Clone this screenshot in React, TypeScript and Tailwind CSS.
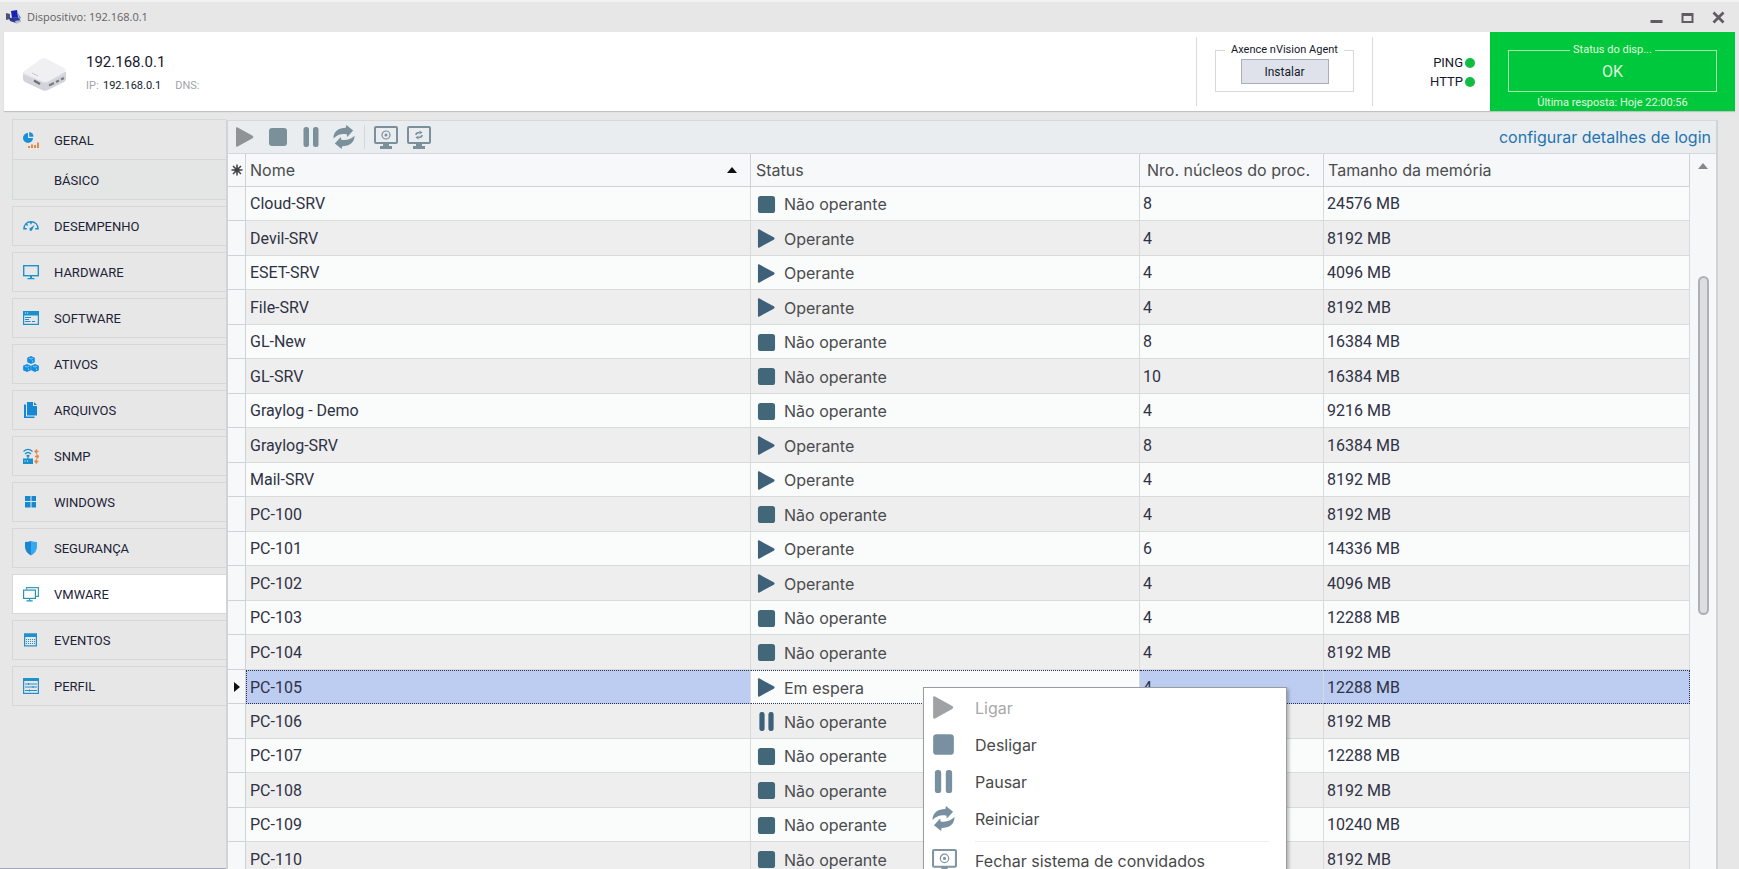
import React from 'react';
import clsx from 'clsx';

type VmState = 'stop' | 'play' | 'pause';

interface Machine {
  name: string;
  state: VmState;
  status: string;
  cores: number;
  memory: string;
}

const machines: Machine[] = [
  { name: 'Cloud-SRV', state: 'stop', status: 'Não operante', cores: 8, memory: '24576 MB' },
  { name: 'Devil-SRV', state: 'play', status: 'Operante', cores: 4, memory: '8192 MB' },
  { name: 'ESET-SRV', state: 'play', status: 'Operante', cores: 4, memory: '4096 MB' },
  { name: 'File-SRV', state: 'play', status: 'Operante', cores: 4, memory: '8192 MB' },
  { name: 'GL-New', state: 'stop', status: 'Não operante', cores: 8, memory: '16384 MB' },
  { name: 'GL-SRV', state: 'stop', status: 'Não operante', cores: 10, memory: '16384 MB' },
  { name: 'Graylog - Demo', state: 'stop', status: 'Não operante', cores: 4, memory: '9216 MB' },
  { name: 'Graylog-SRV', state: 'play', status: 'Operante', cores: 8, memory: '16384 MB' },
  { name: 'Mail-SRV', state: 'play', status: 'Operante', cores: 4, memory: '8192 MB' },
  { name: 'PC-100', state: 'stop', status: 'Não operante', cores: 4, memory: '8192 MB' },
  { name: 'PC-101', state: 'play', status: 'Operante', cores: 6, memory: '14336 MB' },
  { name: 'PC-102', state: 'play', status: 'Operante', cores: 4, memory: '4096 MB' },
  { name: 'PC-103', state: 'stop', status: 'Não operante', cores: 4, memory: '12288 MB' },
  { name: 'PC-104', state: 'stop', status: 'Não operante', cores: 4, memory: '8192 MB' },
  { name: 'PC-105', state: 'play', status: 'Em espera', cores: 4, memory: '12288 MB' },
  { name: 'PC-106', state: 'pause', status: 'Não operante', cores: 4, memory: '8192 MB' },
  { name: 'PC-107', state: 'stop', status: 'Não operante', cores: 4, memory: '12288 MB' },
  { name: 'PC-108', state: 'stop', status: 'Não operante', cores: 4, memory: '8192 MB' },
  { name: 'PC-109', state: 'stop', status: 'Não operante', cores: 4, memory: '10240 MB' },
  { name: 'PC-110', state: 'stop', status: 'Não operante', cores: 4, memory: '8192 MB' },
];

const SELECTED = 'PC-105';

interface IconProps {
  className?: string;
}

const PlayIcon: React.FC<IconProps> = ({ className }) => (
  <svg viewBox="0 0 20 20" className={className} fill="currentColor" aria-hidden="true">
    <path d="M1 1.2Q1 0 2.200.3L17.600 8.800Q19.400 10 17.600 11.200L2.200 19.700Q1 20 1 18.800Z" />
  </svg>
);

const StopIcon: React.FC<IconProps> = ({ className }) => (
  <svg viewBox="0 0 20 20" className={className} fill="currentColor" aria-hidden="true">
    <rect x="1" y="1" width="18" height="18" rx="3" />
  </svg>
);

const PauseIcon: React.FC<IconProps> = ({ className }) => (
  <svg viewBox="0 0 20 20" className={className} fill="currentColor" aria-hidden="true">
    <rect x="2.500" y="0" width="5.500" height="20" rx="2.500" />
    <rect x="12" y="0" width="5.500" height="20" rx="2.500" />
  </svg>
);

const RestartIcon: React.FC<IconProps> = ({ className }) => (
  <svg viewBox="0 0 24 26" className={className} fill="currentColor" aria-hidden="true">
    <path d="M0.500 14.500C0.500 7 6 3 14 3L14.500 0L22 6L15.500 13L15 10C9 9 5 10.500 0.500 14.500Z" />
    <path d="M23.500 11.500C23.500 19 18 23 10 23L9.500 26L2 20L8.500 13L9 16C15 17 19 15.500 23.500 11.500Z" />
  </svg>
);

const GuestOffIcon: React.FC<IconProps> = ({ className }) => (
  <svg viewBox="0 0 24 23" className={className} fill="none" stroke="currentColor" aria-hidden="true">
    <rect x="1" y="1" width="22" height="16" rx="1" strokeWidth="2" />
    <circle cx="12" cy="9" r="4" strokeWidth="1.200" />
    <circle cx="12" cy="9" r="1.500" fill="currentColor" stroke="none" />
    <path d="M9 17h6v3h3v3H6v-3h3z" fill="currentColor" stroke="none" />
  </svg>
);

const GuestRestartIcon: React.FC<IconProps> = ({ className }) => (
  <svg viewBox="0 0 24 23" className={className} fill="none" stroke="currentColor" aria-hidden="true">
    <rect x="1" y="1" width="22" height="16" rx="1" strokeWidth="2" />
    <path d="M9 9C9 7 10.500 6.500 12.500 6.500M15 9C15 11 13.500 11.500 11.500 11.500" strokeWidth="1.600" />
    <path d="M12.500 4.500l3 2-3 2zM11.500 9.500l-3 2 3 2z" fill="currentColor" stroke="none" />
    <path d="M9 17h6v3h3v3H6v-3h3z" fill="currentColor" stroke="none" />
  </svg>
);

const stateIcons: Record<VmState, React.FC<IconProps>> = {
  play: PlayIcon,
  stop: StopIcon,
  pause: PauseIcon,
};

// Sidebar glyphs, all on a 16px grid
const glyphs: Record<string, React.ReactNode> = {
  GERAL: (
    <>
      <path d="M5 1a5 5 0 1 0 5 5H5z" fill="#1a8fd6" />
      <path d="M6.200 0A4.500 4.500 0 0 1 10.500 4.800H6.200z" fill="#1a8fd6" />
      <path d="M5 14h2v2H5zM8 12.500h2V16H8zM11 13h2v3h-2zM14 10.500h2V16h-2z" fill="#e08a4a" />
    </>
  ),
  DESEMPENHO: (
    <g fill="none" stroke="#1f8ccb" strokeWidth="1.400">
      <path d="M.8 11.500C.8 6.500 4 3.700 8 3.700s7.200 2.800 7.200 7.800M.8 10.800h3M12.200 10.800h3M3.200 6l1.500 1.500M8 3.700v2.500" />
      <path d="M6.500 10.500L11.500 7 9 12.300Q7.500 13.500 6.600 12.300Z" fill="#1f8ccb" stroke="none" />
    </g>
  ),
  HARDWARE: (
    <>
      <rect x=".7" y="1.700" width="14.600" height="10" fill="none" stroke="#1a93cf" strokeWidth="1.400" />
      <path d="M7 12h2v2h2.500v1.200h-7V14H7z" fill="#1a93cf" />
    </>
  ),
  SOFTWARE: (
    <>
      <rect x=".6" y="1.600" width="14.800" height="12.800" fill="none" stroke="#1a8fd0" strokeWidth="1.200" />
      <path d="M0 1h16v4.500H0z" fill="#1a8fd0" />
      <path d="M2 3h1M4.200 3h1" stroke="#fff" />
      <path d="M2 7.500h6M2 9.500h4M2 11.500h5.500M9 11.500h3" stroke="#1a8fd0" />
    </>
  ),
  ATIVOS: (
    <>
      <path d="M8 0l3.800 1.700v4.600L8 8 4.200 6.300V1.700zM4 8l3.900 1.700v4.600L4 16 .1 14.300V9.700zM12 8l3.900 1.700v4.600L12 16l-3.900-1.700V9.700z" fill="#168ee0" />
      <path d="M6 2.200L8 3l2-.8M2 10.200l2 .8 2-.8M10 10.200l2 .8 2-.8M5.500 12.500v1.500M13.500 12.500v1.500M9.500 4.500v1.500" fill="none" stroke="#9ad4f5" strokeWidth=".8" />
    </>
  ),
  ARQUIVOS: (
    <>
      <path d="M4 0h6v4h4v9.500H4z" fill="#1787d4" />
      <path d="M11 0l3 3h-3z" fill="#1787d4" />
      <path d="M1 2.500h2v12h8.500V16H1z" fill="#1787d4" />
    </>
  ),
  SNMP: (
    <>
      <path d="M0 10.500h10V16H0z" fill="#1a8fd0" />
      <path d="M1.500 13h1M4 13h1" stroke="#fff" />
      <path d="M.5 3.500Q5-.8 9.500 3.500M2 6Q5 3 8 6M3.500 8.200Q5 6.800 6.500 8.200M5 8v3" fill="none" stroke="#1a8fd0" strokeWidth="1.200" />
      <path d="M12 3.500h3.500M14 1.500l-2 2 2 2M12 8.500h3.500M13.500 6.500l2 2-2 2M12 13.500h3.500M14 11.500l-2 2 2 2" fill="none" stroke="#e58a50" strokeWidth="1.400" />
    </>
  ),
  WINDOWS: <path d="M2 2h5.500v5H2zM8.500 2H13v5H8.500zM2 8h5.500v5.500H2zM8.500 8H13v5.500H8.500z" fill="#1389cf" />,
  'SEGURANÇA': (
    <>
      <path d="M2 2Q5 2 8 1v14.500Q2 12 2 7z" fill="#1b86cf" />
      <path d="M8 1q3 1 6 1v5q0 5-6 8.500z" fill="#39a9ee" />
    </>
  ),
  VMWARE: (
    <>
      <path d="M3.500 3.500V1.600h11.900v8.800H13" fill="none" stroke="#3a9fb8" strokeWidth="1.200" />
      <rect x=".6" y="4.100" width="11.800" height="8.300" fill="none" stroke="#2894bb" strokeWidth="1.200" />
      <path d="M6 12.500h1.200v1.800h2.500v1.200H3.500v-1.200H6z" fill="#2894bb" />
    </>
  ),
  EVENTOS: (
    <>
      <rect x="1.600" y="2.100" width="11.800" height="11.800" fill="none" stroke="#2190cb" strokeWidth="1.200" />
      <path d="M1 1.500h13V5H1z" fill="#2190cb" />
      <path d="M3 7.500h9M3 9.500h9M3 11.500h9" stroke="#2190cb" strokeDasharray="1 1" />
    </>
  ),
  PERFIL: (
    <>
      <rect x=".6" y=".6" width="14.800" height="14.800" fill="none" stroke="#2190cb" strokeWidth="1.200" />
      <path d="M0 0h16v3H0z" fill="#2190cb" />
      <path d="M2 6h12M2 9h12M2 12.500h12M5.500 5v2M10 8v2M6.500 11.500v2" stroke="#2190cb" />
    </>
  ),
};

const menuAfterGeral = [
  'DESEMPENHO', 'HARDWARE', 'SOFTWARE', 'ATIVOS', 'ARQUIVOS', 'SNMP',
  'WINDOWS', 'SEGURANÇA', 'VMWARE', 'EVENTOS', 'PERFIL',
];

const SideIcon: React.FC<{ name: string }> = ({ name }) => (
  <svg viewBox="0 0 16 16" className="h-4 w-4" aria-hidden="true">{glyphs[name]}</svg>
);

const SideItem: React.FC<{ name: string }> = ({ name }) => (
  <a
    href="#"
    className={clsx(
      'flex h-10 items-center gap-[15px] border border-r-0 border-[#d5d8da] pl-[10px] text-[13px] text-[#1d2337]',
      name === 'VMWARE' && 'bg-white'
    )}
  >
    <SideIcon name={name} />
    <span className="pt-[2px]">{name}</span>
  </a>
);

const TitleBar = () => (
  <div className="flex h-8 shrink-0 items-center border-t-2 border-[#f2f2f2] pl-[6px] pr-[14px]">
    <svg viewBox="0 0 16 14" className="h-[14px] w-4" aria-hidden="true">
      <path d="M0 3l4 1v5l-4 1z" fill="#4b5573" />
      <path d="M5 1l6-1 1 7-6 1z" fill="#1a22b4" />
      <path d="M3 8l9-1 3 4-5 2-6-2z" fill="#2b3a9a" />
      <path d="M12 3l3 5-2 1z" fill="#5a83c8" />
      <path d="M9 11l6-1v2l-5 2z" fill="#b9bccb" />
    </svg>
    <span className="ml-[5px] font-['Open_Sans',sans-serif] text-[11px] text-[#626264]">Dispositivo: 192.168.0.1</span>
    <div className="ml-auto flex items-center gap-[18px] text-[#615c62]">
      <button type="button" aria-label="Minimizar">
        <svg viewBox="0 0 13 13" className="h-[13px] w-[13px]"><path d="M0.500 9h12v3h-12z" fill="currentColor" /></svg>
      </button>
      <button type="button" aria-label="Maximizar">
        <svg viewBox="0 0 13 13" className="h-[13px] w-[13px]"><path d="M0.500 2h12v10h-12zM2.500 5v5h8V5z" fill="currentColor" fillRule="evenodd" /></svg>
      </button>
      <button type="button" aria-label="Fechar">
        <svg viewBox="0 0 13 13" className="h-[13px] w-[13px]"><path d="M1.500 1.500l10 10M11.500 1.500l-10 10" stroke="currentColor" strokeWidth="2.800" /></svg>
      </button>
    </div>
  </div>
);

const DeviceHeader = () => (
  <header className="mx-1 flex h-[79px] shrink-0 bg-white text-[#15192b] shadow-[0_1px_1px_#bfc1c2]">
    <div className="flex flex-1 pl-[18px] pt-5">
      <svg viewBox="0 0 46 36" className="mt-1 h-9 w-[46px]" aria-hidden="true">
        <path d="M1 16v7q0 2 2 3l17 8q3 1.500 6 0l16-8q2-1 2-3v-7z" fill="#d3d4da" />
        <path d="M1 17q0-2 3-3L19 3q3-2 6 0l17 9q3 2 1 4L26 26q-3 2-6 0L3 19q-2-1-2-2z" fill="#f0f0f3" />
        <path d="M2 18l18 8q3 1 6 0l17-9" fill="none" stroke="#dcdde2" />
        <path d="M10 17l6 3" stroke="#c5c7ce" />
        <path d="M12 24.500l6 3.500" stroke="#6e717d" strokeWidth="2.400" />
        <path d="M27 29.500l5-2.500M34 26l3-1.500M39 23.500l3-1.500" stroke="#777a86" strokeWidth="2" />
      </svg>
      <div className="ml-[18px]">
        <h1 className="text-[15px] leading-5">192.168.0.1</h1>
        <p className="mt-1 flex text-[11px] leading-5">
          <span className="w-[17px] text-[#a3a3a8]">IP:</span>
          <span>192.168.0.1</span>
          <span className="ml-[14px] text-[#a3a3a8]">DNS:</span>
        </p>
      </div>
    </div>
    <div className="my-[5px] flex w-[177px] justify-center border-x border-[#d9dcde] pt-[5px]">
      <fieldset className="h-[50px] w-[139px] border border-[#d5d8dc] text-center">
        <legend className="mx-auto px-[6px] text-[11px] leading-4">Axence nVision Agent</legend>
        <button type="button" className="mt-px h-[25px] w-[88px] border border-[#a9aebb] bg-[#dfe2ea] text-xs leading-4">
          Instalar
        </button>
      </fieldset>
    </div>
    <div className="flex w-[117px] flex-col items-end justify-center pr-[15px] pt-px text-[13px] leading-[19px]">
      {['PING', 'HTTP'].map((service) => (
        <div key={service} className="flex items-center gap-[2px]">
          {service}
          <span className="h-[10px] w-[10px] rounded-full bg-[#10bd42]" />
        </div>
      ))}
    </div>
    <div className="flex w-[245px] flex-col items-center bg-[#00c83c] pt-[10px] text-[#e2f8df]">
      <fieldset className="h-[50px] w-[209px] border border-[#a5eea9] text-center">
        <legend className="mx-auto px-[3px] text-[11px] leading-4">Status do disp...</legend>
        <span className="block text-base leading-7">OK</span>
      </fieldset>
      <span className="mt-[3px] text-[11px] leading-4">Última resposta: Hoje 22:00:56</span>
    </div>
  </header>
);

const Sidebar = () => (
  <nav className="w-[226px] shrink-0 space-y-[6px] border-b border-[#a2a6bc] pl-3 pt-2">
    <div className="border border-r-0 border-[#d5d8da] text-[13px] text-[#1d2337]">
      <a href="#" className="flex h-[39px] items-center gap-[15px] pl-[10px]">
        <SideIcon name="GERAL" />
        <span className="pt-[2px]">GERAL</span>
      </a>
      <a href="#" className="flex h-10 items-center border-t border-[#d5d8da] bg-[#e4e5e5] pl-[41px] pt-[2px]">BÁSICO</a>
    </div>
    {menuAfterGeral.map((name) => (
      <SideItem key={name} name={name} />
    ))}
  </nav>
);

const toolButton = 'flex h-8 w-[33px] items-center justify-center';

const Toolbar = () => (
  <div className="flex h-[34px] shrink-0 items-center border-b border-t border-[#d6d9db] bg-[#e9edef] text-[#7b909b]">
    <button type="button" aria-label="Ligar" className={toolButton}><PlayIcon className="h-5 w-5 text-[#909395]" /></button>
    <button type="button" aria-label="Desligar" className={toolButton}><StopIcon className="h-5 w-5" /></button>
    <button type="button" aria-label="Pausar" className={toolButton}><PauseIcon className="h-5 w-5" /></button>
    <button type="button" aria-label="Reiniciar" className={toolButton}><RestartIcon className="h-6 w-[22px]" /></button>
    <span className="mx-1 h-6 w-px bg-[#d2d7da]" />
    <button type="button" aria-label="Fechar sistema de convidados" className={toolButton}><GuestOffIcon className="h-[23px] w-6" /></button>
    <button type="button" aria-label="Reiniciar sistema de convidados" className={toolButton}><GuestRestartIcon className="h-[23px] w-6" /></button>
    <a href="#" className="ml-auto pr-[5px] font-[Inter,sans-serif] text-base text-[#2473b0]">configurar detalhes de login</a>
  </div>
);

const MachineRow: React.FC<{ machine: Machine }> = ({ machine }) => {
  const selected = machine.name === SELECTED;
  const StateIcon = stateIcons[machine.state];
  const cell = clsx(
    'border-r border-[#d8dadb] pb-0 pt-px',
    selected ? 'border-y border-y-[#2b3150] [border-block-style:dotted]' : 'border-b'
  );
  const blue = selected && 'bg-[#bccdf1]';

  return (
    <tr className="h-[34px] odd:bg-[#fafbfb] even:h-[35px] even:bg-[#eeeeee]">
      <td className="border-b border-r border-[#cfd3d6] bg-[#f6f8f9] p-0">
        {selected && (
          <svg viewBox="0 0 6 10" className="ml-[6px] h-[10px] w-[6px]" aria-label="Selecionado"><path d="M0 0l6 5-6 5z" fill="#111" /></svg>
        )}
      </td>
      <td className={clsx(cell, blue, selected ? 'border-l border-l-[#2b3150] pl-[3px] [border-left-style:dotted]' : 'pl-1')}>
        {machine.name}
      </td>
      <td className={clsx(cell, 'pl-[6px] font-[Inter,sans-serif] text-[#4b4c4e]')}>
        <div className="flex items-center gap-2">
          <StateIcon className={clsx('h-[19px] w-[19px]', machine.state === 'stop' ? 'text-[#416778]' : 'text-[#3f6079]')} />
          {machine.status}
        </div>
      </td>
      <td className={clsx(cell, blue, 'pl-[3px]')}>{machine.cores}</td>
      <td className={clsx(cell, blue, 'pl-[3px]', selected && 'border-r-[#2b3150] [border-right-style:dotted]')}>{machine.memory}</td>
    </tr>
  );
};

const MachineTable = () => (
  <table className="w-full table-fixed border-separate border-spacing-0 text-base text-[#2f3245]">
    <colgroup>
      <col className="w-[18px]" />
      <col className="w-[505px]" />
      <col className="w-[389px]" />
      <col className="w-[184px]" />
      <col />
    </colgroup>
    <thead>
      <tr className="h-[33px] bg-[#f6f8f9] text-left font-[Inter,sans-serif] text-[#4b4c4e] [&>th]:border-b [&>th]:border-r [&>th]:border-[#cfd3d6] [&>th]:font-normal">
        <th className="p-0">
          <svg viewBox="0 0 12 12" className="mx-auto h-3 w-3" aria-label="Marcador">
            <path d="M6 .5v11M.5 6h11M2 2l8 8M10 2l-8 8" stroke="#3f4245" strokeWidth="1.500" />
            <circle cx="6" cy="6" r="2.500" fill="#3f4245" />
          </svg>
        </th>
        <th className="py-0 pl-1 pr-[13px]">
          <div className="flex items-center justify-between">
            Nome
            <svg viewBox="0 0 10 6" className="h-[6px] w-[10px]" aria-hidden="true"><path d="M0 6l5-6 5 6z" fill="#111" /></svg>
          </div>
        </th>
        <th className="py-0 pl-[5px]">Status</th>
        <th className="whitespace-nowrap py-0 pl-[7px]">Nro. núcleos do proc.</th>
        <th className="py-0 pl-1">Tamanho da memória</th>
      </tr>
    </thead>
    <tbody>
      {machines.map((machine) => (
        <MachineRow key={machine.name} machine={machine} />
      ))}
    </tbody>
  </table>
);

const menuButton = 'flex h-[37px] w-full items-center pl-2 text-left';

const ContextMenu = () => (
  <div className="absolute left-[695px] top-[533px] w-[364px] border border-[#9a9ca3] bg-white pt-px font-[Inter,sans-serif] text-base text-[#48494b] shadow-[2px_2px_3px_rgba(0,0,0,0.25)]">
    <button type="button" disabled className={clsx(menuButton, 'text-[#a8a8aa]')}>
      <PlayIcon className="mr-5 h-[23px] w-[23px] text-[#a0a1a3]" />Ligar
    </button>
    <button type="button" className={menuButton}><StopIcon className="mr-5 h-[23px] w-[23px] text-[#7890a0]" />Desligar</button>
    <button type="button" className={menuButton}><PauseIcon className="mr-5 h-[23px] w-[23px] text-[#7890a0]" />Pausar</button>
    <button type="button" className={menuButton}><RestartIcon className="mr-5 h-[25px] w-[23px] text-[#7890a0]" />Reiniciar</button>
    <hr className="ml-[51px] mr-4 mt-1 border-[#eeeeec]" />
    <button type="button" className={menuButton}><GuestOffIcon className="mr-[18px] h-6 w-[25px] text-[#8195a2]" />Fechar sistema de convidados</button>
  </div>
);

const App: React.FC = () => (
  <div className="flex h-screen flex-col overflow-hidden bg-[#e7e7e7] font-[Roboto,sans-serif]">
    <TitleBar />
    <DeviceHeader />
    <div className="flex min-h-0 flex-1">
      <Sidebar />
      <main className="mr-[21px] mt-[9px] flex min-w-0 flex-1 flex-col border-x-2 border-[#d0d4d7]">
        <Toolbar />
        <div className="relative flex min-h-0 flex-1 overflow-hidden">
          <div className="min-w-0 flex-1">
            <MachineTable />
          </div>
          <div className="flex w-[26px] shrink-0 flex-col items-center bg-[#f5f7f8] pt-[9px]">
            <svg viewBox="0 0 10 6" className="h-[6px] w-[10px]" aria-hidden="true"><path d="M0 6l5-6 5 6z" fill="#85878a" /></svg>
            <div className="mt-[107px] h-[339px] w-[11px] rounded-full border-2 border-[#aeb1b4] bg-[#dcdfe1]" />
          </div>
          <ContextMenu />
        </div>
      </main>
    </div>
  </div>
);

export default App;
